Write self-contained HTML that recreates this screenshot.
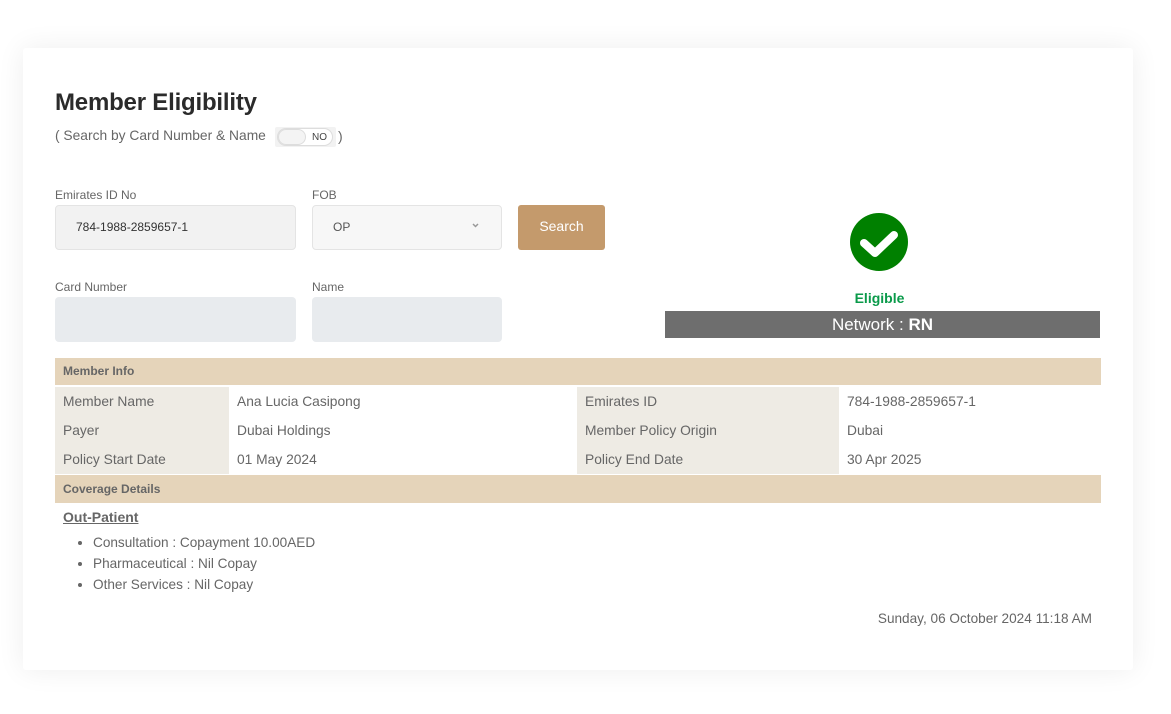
<!DOCTYPE html>
<html><head><meta charset="utf-8"><style>
*{box-sizing:border-box;margin:0;padding:0}
body{width:1171px;height:714px;background:#fff;font-family:"Liberation Sans",sans-serif;color:#666;position:relative;overflow:hidden}
.card{position:absolute;left:23px;top:48px;width:1110px;height:622px;background:#fff;box-shadow:0 0 28px rgba(0,0,0,.07);border-radius:3px}
.a{position:absolute}
h1{position:absolute;left:55px;top:89px;font-size:24px;font-weight:bold;color:#2b2b2b;letter-spacing:-.2px}
.lbl{font-size:12px;color:#666}
.inp{border:1px solid #e4e4e4;border-radius:4px}
.hdr{position:absolute;left:55px;width:1046px;background:#e5d4ba;font-size:12px;font-weight:bold;color:#666;padding-left:8px;line-height:27px}
.row{position:absolute;left:55px;width:1046px;height:29px;font-size:13.8px;line-height:29px}
.row div{position:absolute;top:0;height:29px;padding-left:8px}
.c1{left:0;width:174px;background:#eeebe4}
.c2{left:174px;width:348px}
.c3{left:522px;width:262px;background:#eeebe4}
.c4{left:784px;width:262px}
ul{position:absolute;left:93px;top:532px;font-size:13.6px;line-height:21px;list-style:disc}
</style></head><body>
<div class="card"></div>
<h1>Member Eligibility</h1>
<div class="a" style="left:55px;top:128px;font-size:13.8px">( Search by Card Number &amp; Name</div>
<div class="a" style="left:275px;top:127px;width:61px;height:20px;background:#f2f2f2;border-radius:2px"></div>
<div class="a" style="left:277px;top:128px;width:56px;height:18px;border:1px solid #ddd;border-radius:9px;background:#fff"></div>
<div class="a" style="left:278px;top:129px;width:28px;height:16px;border:1px solid #ddd;border-radius:8px;background:#f4f4f4"></div>
<div class="a" style="left:312px;top:132px;font-size:10px;color:#444">NO</div>
<div class="a" style="left:338px;top:128px;font-size:14px">)</div>

<div class="a lbl" style="left:55px;top:188px">Emirates ID No</div>
<div class="a inp" style="left:55px;top:205px;width:241px;height:45px;background:#f2f2f2"></div>
<div class="a" style="left:76px;top:220px;font-size:12px;color:#333">784-1988-2859657-1</div>
<div class="a lbl" style="left:312px;top:188px">FOB</div>
<div class="a inp" style="left:312px;top:205px;width:190px;height:45px;background:#f7f7f7"></div>
<div class="a" style="left:333px;top:220px;font-size:12px;color:#555">OP</div>
<svg class="a" style="left:472px;top:223px" width="7" height="5" viewBox="0 0 7 5"><path d="M1 1 L3.5 3.5 L6 1" stroke="#999" stroke-width="1.5" fill="none"/></svg>
<div class="a" style="left:518px;top:205px;width:87px;height:45px;background:#c49a6c;border-radius:3px;color:#fff;font-size:14px;text-align:center;line-height:43px">Search</div>

<div class="a lbl" style="left:55px;top:280px">Card Number</div>
<div class="a" style="left:55px;top:297px;width:241px;height:45px;background:#e8ebee;border-radius:4px"></div>
<div class="a lbl" style="left:312px;top:280px">Name</div>
<div class="a" style="left:312px;top:297px;width:190px;height:45px;background:#e8ebee;border-radius:4px"></div>

<svg class="a" style="left:850px;top:213px" width="58" height="58" viewBox="0 0 58 58"><circle cx="29" cy="29" r="29" fill="#008000"/><path d="M14 30 L25 40 L44 22" stroke="#fff" stroke-width="8" fill="none" stroke-linecap="round" stroke-linejoin="round"/></svg>
<div class="a" style="left:662px;top:290px;width:435px;text-align:center;font-size:14px;font-weight:bold;color:#0a9a4a">Eligible</div>
<div class="a" style="left:665px;top:311px;width:435px;height:27px;background:#6e6e6e;color:#fff;text-align:center;font-size:17px;line-height:27px">Network : <b>RN</b></div>

<div class="hdr" style="top:358px;height:27px">Member Info</div>
<div class="row" style="top:387px"><div class="c1">Member Name</div><div class="c2">Ana Lucia Casipong</div><div class="c3">Emirates ID</div><div class="c4">784-1988-2859657-1</div></div>
<div class="row" style="top:416px"><div class="c1">Payer</div><div class="c2">Dubai Holdings</div><div class="c3">Member Policy Origin</div><div class="c4">Dubai</div></div>
<div class="row" style="top:445px"><div class="c1">Policy Start Date</div><div class="c2">01 May 2024</div><div class="c3">Policy End Date</div><div class="c4">30 Apr 2025</div></div>
<div class="hdr" style="top:475px;height:28px;line-height:28px">Coverage Details</div>
<div class="a" style="left:63px;top:509px;font-size:14px;font-weight:bold;text-decoration:underline">Out-Patient</div>
<ul><li>Consultation : Copayment 10.00AED</li><li>Pharmaceutical : Nil Copay</li><li>Other Services : Nil Copay</li></ul>
<div class="a" style="right:79px;top:611px;font-size:13.6px">Sunday, 06 October 2024 11:18 AM</div>
</body></html>
